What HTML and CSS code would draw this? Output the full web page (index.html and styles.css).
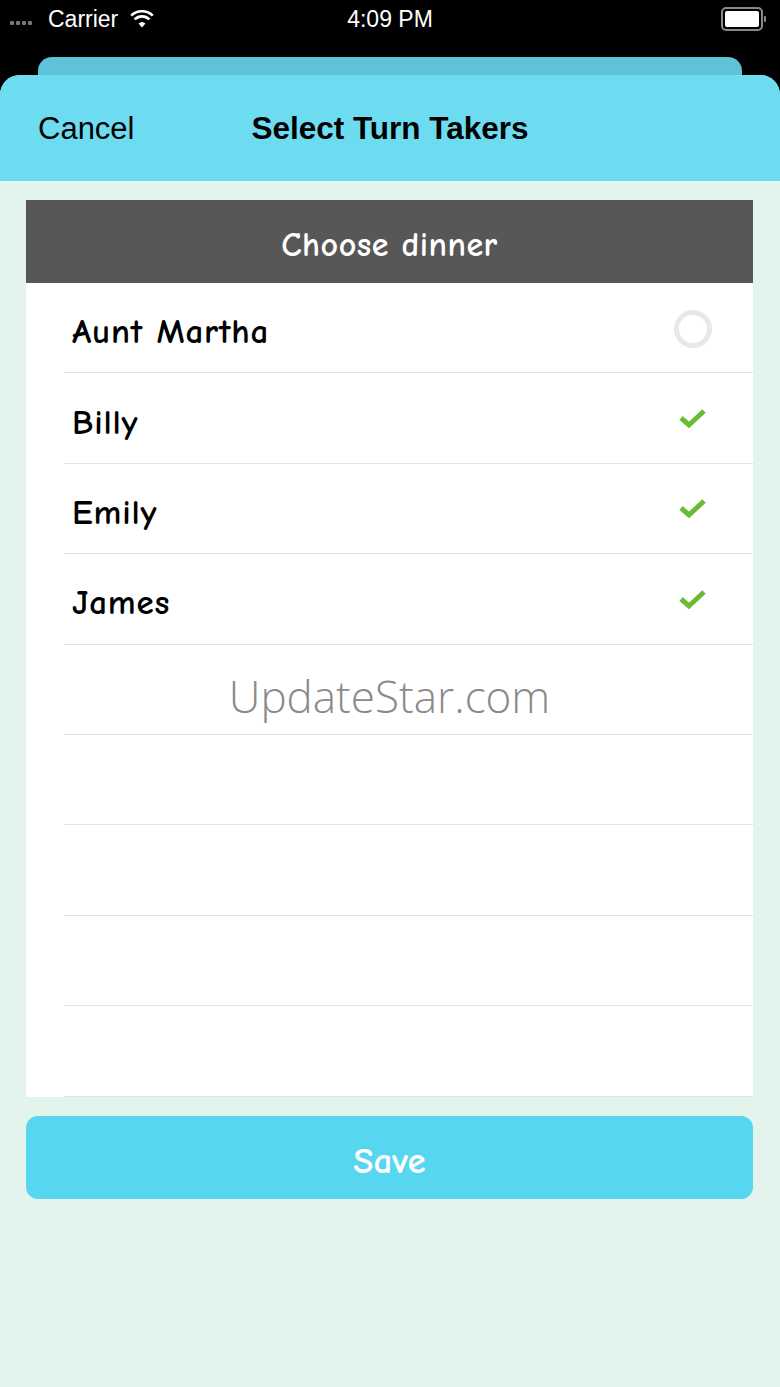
FILE: index.html
```html
<!DOCTYPE html>
<html lang="en">
<head>
    <meta charset="UTF-8">
    <meta name="viewport" content="width=device-width, initial-scale=1.0">
    <title>Select Turn Takers</title>
    <link rel="stylesheet" href="styles.css">
</head>
<body>
    <div class="status-bar">
        <div class="status-left">
            <span class="signal"><i></i><i></i><i></i><i></i></span>
            <span>Carrier</span>
            <svg class="wifi" width="24" height="18" viewBox="0 0 24 18">
                <path d="M12 17.5 L8.6 13.6 A5 5 0 0 1 15.4 13.6 Z" fill="#fff"/>
                <path d="M4.6 9.4 A10.5 10.5 0 0 1 19.4 9.4" stroke="#fff" stroke-width="2.6" fill="none"/>
                <path d="M1.2 5.6 A15.5 15.5 0 0 1 22.8 5.6" stroke="#fff" stroke-width="2.6" fill="none"/>
            </svg>
        </div>
        <div class="status-time">4:09 PM</div>
        <div class="status-right">
            <span class="battery"><span class="battery-level"></span></span>
            <span class="battery-tip"></span>
        </div>
    </div>

    <div class="sheet-back"></div>

    <div class="sheet">
        <div class="nav">
            <span class="nav-cancel">Cancel</span>
            <span class="nav-title">Select Turn Takers</span>
        </div>

        <div class="content">
            <div class="card">
                <div class="card-header">Choose dinner</div>
                <ul class="list">
                    <li class="row"><span class="name">Aunt Martha</span><span class="radio"></span></li>
                    <li class="row"><span class="name">Billy</span>
                        <svg class="check" width="28" height="22" viewBox="0 0 28 22"><path d="M2 11 L10 18 L25 4" stroke="#6cbb35" stroke-width="5" fill="none"/></svg>
                    </li>
                    <li class="row"><span class="name">Emily</span>
                        <svg class="check" width="28" height="22" viewBox="0 0 28 22"><path d="M2 11 L10 18 L25 4" stroke="#6cbb35" stroke-width="5" fill="none"/></svg>
                    </li>
                    <li class="row"><span class="name">James</span>
                        <svg class="check" width="28" height="22" viewBox="0 0 28 22"><path d="M2 11 L10 18 L25 4" stroke="#6cbb35" stroke-width="5" fill="none"/></svg>
                    </li>
                    <li class="row row-mark"><span class="watermark">UpdateStar.com</span></li>
                    <li class="row"></li>
                    <li class="row"></li>
                    <li class="row"></li>
                    <li class="row"></li>
                </ul>
            </div>
            <button class="save">Save</button>
        </div>
    </div>
</body>
</html>
```

FILE: styles.css
```css
body {
    margin: 0;
    padding: 0;
    width: 780px;
    height: 1387px;
    overflow: hidden;
    background: #000;
    font-family: "Liberation Sans", Arial, sans-serif;
    position: relative;
}
.status-bar {
    height: 38px;
    display: flex;
    align-items: center;
    justify-content: space-between;
    padding: 0 14px 0 10px;
    color: #fff;
    font-size: 23px;
    position: relative;
}
.status-left {
    display: flex;
    align-items: center;
    gap: 8px;
    width: 200px;
}
.signal {
    display: flex;
    gap: 2px;
    margin-top: 8px;
    margin-right: 8px;
}
.signal i {
    width: 4px;
    height: 4px;
    border-radius: 1px;
    background: #777;
}
.wifi {
    margin-left: 4px;
}
.status-time {
    position: absolute;
    left: 0;
    right: 0;
    text-align: center;
    pointer-events: none;
}
.status-right {
    display: flex;
    align-items: center;
    width: 200px;
    justify-content: flex-end;
}
.battery {
    width: 34px;
    height: 16px;
    border: 2px solid #888;
    border-radius: 5px;
    padding: 2px;
    box-sizing: content-box;
    display: flex;
}
.battery-level {
    flex: 1;
    background: #fff;
    border-radius: 2px;
}
.battery-tip {
    width: 2px;
    height: 6px;
    background: #888;
    margin-left: 1px;
    border-radius: 0 1px 1px 0;
}
.sheet-back {
    margin: 19px 38px 0;
    height: 30px;
    background: #5ec3d9;
    border-radius: 14px 14px 0 0;
}
.sheet {
    position: absolute;
    top: 75px;
    left: 0;
    right: 0;
    bottom: 0;
    background: #e3f4ec;
    border-radius: 20px 20px 0 0;
    overflow: hidden;
}
.nav {
    height: 106px;
    background: #6ddcf0;
    position: relative;
    display: flex;
    align-items: center;
    font-size: 31px;
    color: #000;
}
.nav-cancel {
    margin-left: 38px;
    margin-top: 1px;
}
.nav-title {
    position: absolute;
    left: 0;
    right: 0;
    text-align: center;
    font-weight: bold;
    font-size: 31.5px;
}
.content {
    padding: 19px 27px 0 26px;
}
.card {
    background: #fff;
}
.card-header {
    height: 83px;
    box-sizing: border-box;
    padding-top: 7px;
    background: #575757;
    color: #fff;
    font-family: "Comic Neue", "DejaVu Sans", sans-serif;
    font-weight: bold;
    font-size: 34px;
    letter-spacing: 0.5px;
    display: flex;
    align-items: center;
    justify-content: center;
}
.list {
    list-style: none;
    margin: 0;
    padding: 0 0 0 38px;
}
.row {
    height: 89.4px;
    border-bottom: 1px solid #e2e2e2;
    display: flex;
    align-items: center;
    justify-content: space-between;
    padding: 0 45px 0 8px;
    font-family: "Comic Neue", "DejaVu Sans", sans-serif;
    font-weight: bold;
    font-size: 35px;
    letter-spacing: 0.8px;
    color: #000;
}
.name {
    margin-top: 8px;
}
.radio {
    width: 28px;
    height: 28px;
    border: 5px solid #e8e8e8;
    border-radius: 50%;
    margin-right: -4px;
    margin-top: 2px;
}
.check {
    margin-right: 1px;
    margin-top: 0;
}
.row-mark {
    justify-content: center;
    padding: 0 38px 0 0;
    letter-spacing: 0;
}
.watermark {
    font-family: "Open Sans", sans-serif;
    font-weight: 300;
    font-size: 44px;
    color: #8a8a8a;
    margin-top: 14px;
}
.save {
    display: block;
    width: 100%;
    height: 83px;
    margin-top: 19px;
    padding-top: 8px;
    border: none;
    border-radius: 12px;
    background: #57d6f0;
    color: #fff;
    font-family: "Comic Neue", "DejaVu Sans", sans-serif;
    font-weight: bold;
    font-size: 37px;
}
```
